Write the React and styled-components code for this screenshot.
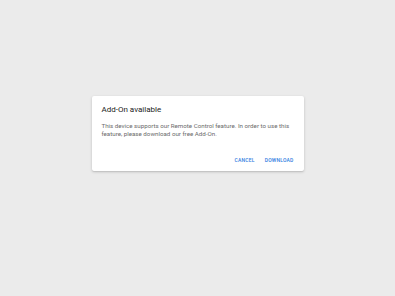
import React from 'react';
import styled, { createGlobalStyle } from 'styled-components';

const GlobalStyle = createGlobalStyle`
  html, body { margin: 0; padding: 0; }
  body {
    background: #ebebeb;
    font-family: Roboto, "Noto Sans", Arial, sans-serif;
  }
`;

const Page = styled.div`
  width: 395px;
  height: 296px;
  display: flex;
  justify-content: center;
  align-items: flex-start;
  padding-top: 96px;
  box-sizing: border-box;
`;

const Dialog = styled.div`
  width: 212px;
  height: 75px;
  background: #fff;
  border-radius: 2px;
  box-shadow: 0 1px 3px rgba(0,0,0,0.18), 0 1px 1px rgba(0,0,0,0.06);
  padding: 9px 10px 0 10px;
  box-sizing: border-box;
  display: flex;
  flex-direction: column;
`;

const Title = styled.h2`
  margin: 0;
  font-size: 8px;
  font-weight: 400;
  color: #1a1a1a;
  line-height: 10px;
`;

const Body = styled.p`
  margin: 6.5px 0 0 0;
  font-size: 6.2px;
  line-height: 8px;
  color: #6b6b6b;
`;

const Actions = styled.div`
  margin-top: auto;
  display: flex;
  justify-content: flex-end;
  gap: 10px;
  padding-bottom: 8px;
`;

const ActionButton = styled.button`
  background: none;
  border: none;
  padding: 0;
  font-family: inherit;
  font-size: 5px;
  font-weight: 500;
  letter-spacing: 0.2px;
  text-transform: uppercase;
  color: #2f7de1;
  cursor: pointer;
`;

export default function App() {
  return (
    <>
      <GlobalStyle />
      <Page>
        <Dialog>
          <Title>Add-On available</Title>
          <Body>
            This device supports our Remote Control feature. In order to use this
            feature, please download our free Add-On.
          </Body>
          <Actions>
            <ActionButton>Cancel</ActionButton>
            <ActionButton>Download</ActionButton>
          </Actions>
        </Dialog>
      </Page>
    </>
  );
}
